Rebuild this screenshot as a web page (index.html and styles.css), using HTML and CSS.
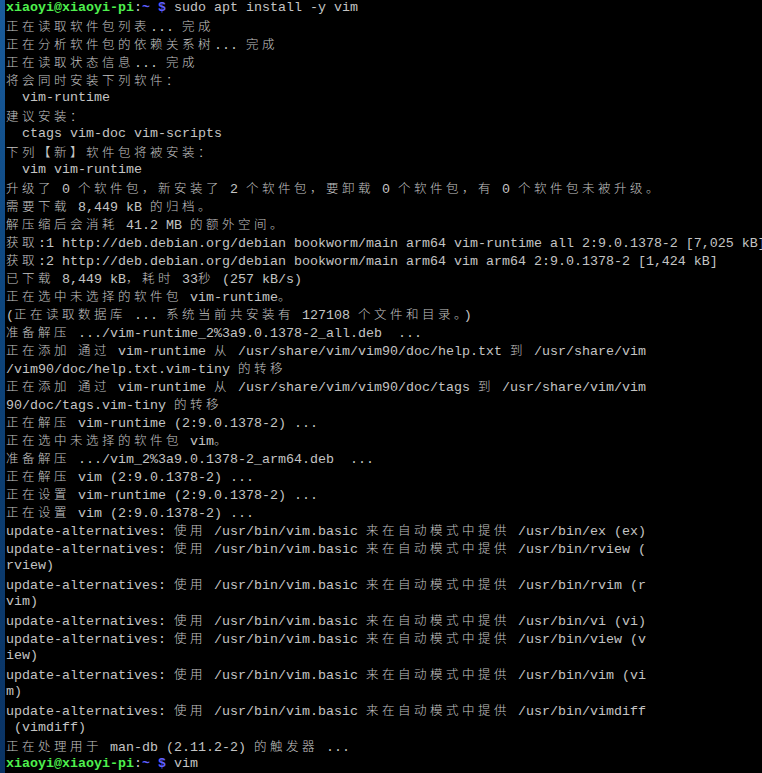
FILE: index.html
```html
<!DOCTYPE html>
<html lang="zh-CN">
<head>
<meta charset="utf-8">
<title>Terminal</title>
<link rel="stylesheet" href="styles.css">
</head>
<body>
<div class="screen">
  <div class="stripe"></div>
  <div class="term">
    <div class="ln"><span class="user">xiaoyi@xiaoyi-pi</span>:<span class="path">~ $</span> sudo apt install -y vim</div>
    <div class="ln"><span class="z">正在读取软件包列表</span>... <span class="z">完成</span></div>
    <div class="ln"><span class="z">正在分析软件包的依赖关系树</span>... <span class="z">完成</span></div>
    <div class="ln"><span class="z">正在读取状态信息</span>... <span class="z">完成</span></div>
    <div class="ln"><span class="z">将会同时安装下列软件：</span></div>
    <div class="ln">  vim-runtime</div>
    <div class="ln"><span class="z">建议安装：</span></div>
    <div class="ln">  ctags vim-doc vim-scripts</div>
    <div class="ln"><span class="z">下列【新】软件包将被安装：</span></div>
    <div class="ln">  vim vim-runtime</div>
    <div class="ln"><span class="z">升级了</span> 0 <span class="z">个软件包，新安装了</span> 2 <span class="z">个软件包，要卸载</span> 0 <span class="z">个软件包，有</span> 0 <span class="z">个软件包未被升级。</span></div>
    <div class="ln"><span class="z">需要下载</span> 8,449 kB <span class="z">的归档。</span></div>
    <div class="ln"><span class="z">解压缩后会消耗</span> 41.2 MB <span class="z">的额外空间。</span></div>
    <div class="ln"><span class="z">获取</span>:1 http://deb.debian.org/debian bookworm/main arm64 vim-runtime all 2:9.0.1378-2 [7,025 kB]</div>
    <div class="ln"><span class="z">获取</span>:2 http://deb.debian.org/debian bookworm/main arm64 vim arm64 2:9.0.1378-2 [1,424 kB]</div>
    <div class="ln"><span class="z">已下载</span> 8,449 kB<span class="z">，耗时</span> 33<span class="z">秒</span> (257 kB/s)</div>
    <div class="ln"><span class="z">正在选中未选择的软件包</span> vim-runtime<span class="z">。</span></div>
    <div class="ln">(<span class="z">正在读取数据库</span> ... <span class="z">系统当前共安装有</span> 127108 <span class="z">个文件和目录。</span>)</div>
    <div class="ln"><span class="z">准备解压</span> .../vim-runtime_2%3a9.0.1378-2_all.deb  ...</div>
    <div class="ln"><span class="z">正在添加</span> <span class="z">通过</span> vim-runtime <span class="z">从</span> /usr/share/vim/vim90/doc/help.txt <span class="z">到</span> /usr/share/vim</div>
    <div class="ln">/vim90/doc/help.txt.vim-tiny <span class="z">的转移</span></div>
    <div class="ln"><span class="z">正在添加</span> <span class="z">通过</span> vim-runtime <span class="z">从</span> /usr/share/vim/vim90/doc/tags <span class="z">到</span> /usr/share/vim/vim</div>
    <div class="ln">90/doc/tags.vim-tiny <span class="z">的转移</span></div>
    <div class="ln"><span class="z">正在解压</span> vim-runtime (2:9.0.1378-2) ...</div>
    <div class="ln"><span class="z">正在选中未选择的软件包</span> vim<span class="z">。</span></div>
    <div class="ln"><span class="z">准备解压</span> .../vim_2%3a9.0.1378-2_arm64.deb  ...</div>
    <div class="ln"><span class="z">正在解压</span> vim (2:9.0.1378-2) ...</div>
    <div class="ln"><span class="z">正在设置</span> vim-runtime (2:9.0.1378-2) ...</div>
    <div class="ln"><span class="z">正在设置</span> vim (2:9.0.1378-2) ...</div>
    <div class="ln">update-alternatives: <span class="z">使用</span> /usr/bin/vim.basic <span class="z">来在自动模式中提供</span> /usr/bin/ex (ex)</div>
    <div class="ln">update-alternatives: <span class="z">使用</span> /usr/bin/vim.basic <span class="z">来在自动模式中提供</span> /usr/bin/rview (</div>
    <div class="ln">rview)</div>
    <div class="ln">update-alternatives: <span class="z">使用</span> /usr/bin/vim.basic <span class="z">来在自动模式中提供</span> /usr/bin/rvim (r</div>
    <div class="ln">vim)</div>
    <div class="ln">update-alternatives: <span class="z">使用</span> /usr/bin/vim.basic <span class="z">来在自动模式中提供</span> /usr/bin/vi (vi)</div>
    <div class="ln">update-alternatives: <span class="z">使用</span> /usr/bin/vim.basic <span class="z">来在自动模式中提供</span> /usr/bin/view (v</div>
    <div class="ln">iew)</div>
    <div class="ln">update-alternatives: <span class="z">使用</span> /usr/bin/vim.basic <span class="z">来在自动模式中提供</span> /usr/bin/vim (vi</div>
    <div class="ln">m)</div>
    <div class="ln">update-alternatives: <span class="z">使用</span> /usr/bin/vim.basic <span class="z">来在自动模式中提供</span> /usr/bin/vimdiff</div>
    <div class="ln"> (vimdiff)</div>
    <div class="ln"><span class="z">正在处理用于</span> man-db (2.11.2-2) <span class="z">的触发器</span> ...</div>
    <div class="ln"><span class="user">xiaoyi@xiaoyi-pi</span>:<span class="path">~ $</span> vim</div>
  </div>
</div>
</body>
</html>
```

FILE: styles.css
```css
html, body {
  margin: 0;
  padding: 0;
  background: #000;
  height: 100%;
  overflow: hidden;
}

.screen {
  display: flex;
  height: 773px;
  overflow: hidden;
}

.stripe {
  flex: 0 0 5px;
  background: linear-gradient(180deg, #1a5c9c 0%, #0f4a84 30%, #0c3e72 60%, #0a3364 100%);
}

.term {
  flex: 1;
  min-width: 0;
  padding-left: 1px;
  margin-top: -1px;
  overflow: hidden;
  font-family: "Liberation Mono", "DejaVu Sans Mono", monospace;
  font-size: 13.333px;
  color: #c4c4c4;
}

.ln {
  height: 18px;
  line-height: 18px;
  white-space: pre;
}

.z {
  font-family: "Noto Sans CJK SC", "Noto Sans CJK JP", sans-serif;
  font-size: 12.5px;
  font-weight: 300;
  letter-spacing: 3.5px;
  line-height: 18px;
}

.user {
  color: #4ef04e;
  font-weight: bold;
}

.path {
  color: #5f5fff;
  font-weight: bold;
}
```
